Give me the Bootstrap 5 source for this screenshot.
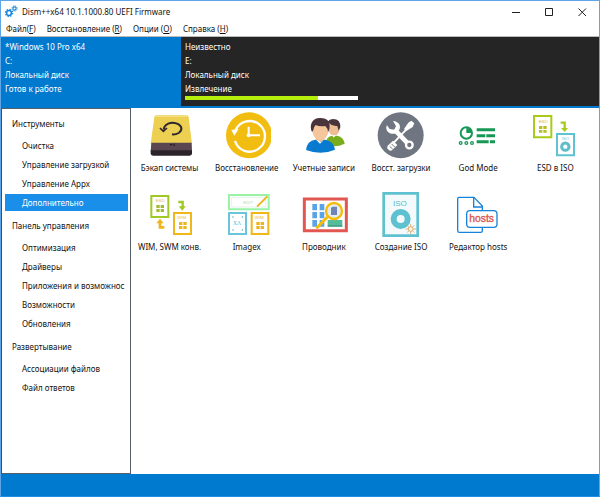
<!DOCTYPE html>
<html lang="ru">
<head>
<meta charset="utf-8">
<meta name="viewport" content="width=device-width, initial-scale=1">
<title>Dism++x64 10.1.1000.80 UEFI Firmware</title>
<link href="https://cdn.jsdelivr.net/npm/bootstrap@5.3.0/dist/css/bootstrap.min.css" rel="stylesheet">
<style>
body{font:8px/14px "Noto Sans","Open Sans",sans-serif;color:#111;background:#fff}
.win{border:1px solid #5fa6e8;border-bottom-color:#1c8fe9}
button{font:inherit;color:inherit;background:none;border:0;padding:0}
.title-bar{height:21px;padding-left:3px}
.title-text{margin-left:3px}
.win-btn{width:33px;height:21px}
.menu-line{height:15px;border-bottom:1px solid #bbb;padding-left:5px;gap:11px}
.menu-line a{color:inherit;text-decoration:none;line-height:14px}
.sys{background:#252525;color:#fff;height:71px;border-bottom:2px solid #007acf}
.sys-item{width:181px;padding:3px 4px 0;text-align:left;line-height:14px;display:flex;flex-direction:column}
.sys-item.current{background:#007acf;width:180px}
.disk-bar{height:4px;border-radius:0;background:#fff;width:100%}
.disk-bar .progress-bar{background:#b6ef0c}
.side{width:130px;border:1px solid #56616d;border-left-color:#0a5ba5;padding:2px 2px 0;overflow:hidden}
.side h2{font:inherit;line-height:26px;margin:0 0 0 8px}
.side a{display:block;height:17px;line-height:17px;margin:0 0 2px 1px;padding-left:17px;color:inherit;text-decoration:none;white-space:nowrap}
.side a.active{background:#1a8fea;color:#fff}
.tools{padding:3px 5px 0 0}
.tool{height:79px;white-space:nowrap;display:flex;flex-direction:column;align-items:center;justify-content:flex-start}
.tool svg{display:block;width:48px;height:49px;margin-bottom:1px}
.foot{height:22px;background:#007acf}
</style>
<script src="https://cdn.jsdelivr.net/npm/bootstrap@5.3.0/dist/js/bootstrap.bundle.min.js"></script>
</head>
<body>
<div class="win d-flex flex-column vh-100">
<header>
<div class="title-bar d-flex align-items-center">
<svg width="15" height="15" viewBox="0 0 15 15" fill="none" stroke="#1687dd"><circle cx="5" cy="9" r="2.4" stroke-width="1.5"/><circle cx="5" cy="9" r="3.6" stroke-width="1.3" stroke-dasharray="1.4 1.43"/><circle cx="10.5" cy="4.5" r="1.6" stroke-width="1.1"/><circle cx="10.5" cy="4.5" r="2.6" stroke-width="1" stroke-dasharray="1 1.04"/></svg>
<span class="title-text">Dism++x64 10.1.1000.80 UEFI Firmware</span>
<div class="ms-auto d-flex">
<button class="win-btn" aria-label="Свернуть"><svg width="9" height="9" stroke="#222"><path d="M0 4.5h8"/></svg></button>
<button class="win-btn" aria-label="Развернуть"><svg width="9" height="9" stroke="#222" fill="none"><path d="M.5.5h7v7h-7z"/></svg></button>
<button class="win-btn" aria-label="Закрыть"><svg width="9" height="9" stroke="#222"><path d="M.5.5l7.5 7.5M8 .5L.5 8"/></svg></button>
</div>
</div>
<nav class="menu-line d-flex">
<a href="#">Файл(<u>F</u>)</a><a href="#">Восстановление (<u>R</u>)</a><a href="#">Опции (<u>O</u>)</a><a href="#">Справка (<u>H</u>)</a>
</nav>
<div class="sys d-flex">
<button class="sys-item current"><span>*Windows 10 Pro x64</span><span>C:</span><span>Локальный диск</span><span>Готов к работе</span></button>
<button class="sys-item"><span>Неизвестно</span><span>E:</span><span>Локальный диск</span><span>Извлечение</span><span class="progress disk-bar"><span class="progress-bar" style="width:77%"></span></span></button>
</div>
</header>
<div class="d-flex flex-grow-1">
<nav class="side flex-shrink-0">
<h2>Инструменты</h2>
<a href="#">Очистка</a><a href="#">Управление загрузкой</a><a href="#">Управление Appx</a><a href="#" class="active">Дополнительно</a>
<h2>Панель управления</h2>
<a href="#">Оптимизация</a><a href="#">Драйверы</a><a href="#">Приложения и возможнос</a><a href="#">Возможности</a><a href="#">Обновления</a>
<h2>Развертывание</h2>
<a href="#">Ассоциации файлов</a><a href="#">Файл ответов</a>
</nav>
<main class="tools flex-grow-1">
<div class="row row-cols-6 g-0 align-items-start">
<button class="tool"><svg viewBox="39 18 144 147"><path d="M71 31H160Q166 31 167 37L177 116H53L64 37Q65 31 71 31Z" fill="#edcf52"/><path d="M68 34H162" stroke="#f4df85" stroke-width="4"/><path d="M55 113H176L177 139H53Z" fill="#594650"/><path d="M53 136H177V145Q177 152 170 152H60Q53 152 53 145Z" fill="#2c242b"/><path d="M111 119h6M123 116v7" stroke="#211b20" stroke-width="4"/><path d="M92 74C94 56 114 50 130 55S151 74 137 84Q128 89 117 88" fill="none" stroke="#30262d" stroke-width="6"/><path d="M81 69L91 79L102 69" fill="none" stroke="#30262d" stroke-width="5"/></svg>Бэкап системы</button>
<button class="tool"><svg viewBox="273 18 144 147"><circle cx="351" cy="91" r="69" fill="#f1bd10"/><path d="M311 75A46 46 0 1 1 309 108" fill="none" stroke="#fff" stroke-width="7"/><path d="M298 75L320 72L307 92Z" fill="#fff"/><path d="M350 65V91H384" fill="none" stroke="#fff" stroke-width="6"/><circle cx="350" cy="91" r="6" fill="#fff"/></svg>Восстановление</button>
<button class="tool"><svg viewBox="45 18 144 147"><path d="M121 118Q124 93 142 92H157Q176 96 179 116Q155 128 126 121Z" fill="#78ae1d"/><path d="M139 88L146 98L155 88" fill="#fff"/><ellipse cx="147" cy="71" rx="17" ry="20" fill="#eebd94"/><path d="M127 70Q122 43 144 42Q167 42 166 67L161 77L157 63Q143 65 132 55Z" fill="#49343c"/><path d="M63 135Q66 107 91 104H121Q146 108 150 134Q108 152 63 135Z" fill="#087bd1"/><path d="M91 103Q104 116 119 103L113 94H96Z" fill="#f2bf94"/><path d="M94 105L105 116L116 105L108 110Z" fill="#fff"/><ellipse cx="106" cy="78" rx="24" ry="27" fill="#f5c69c"/><path d="M81 80Q74 67 80 53Q87 38 107 39Q132 40 134 59Q135 72 129 82Q129 70 121 63Q104 66 92 60Q86 65 84 78Z" fill="#49343c"/></svg>Учетные записи</button>
<button class="tool"><svg viewBox="279 18 144 147"><circle cx="350" cy="91" r="69" fill="#707681"/><path d="M373 67L318 125" stroke="#fff" stroke-width="6"/><path d="M360 72L373 53L382 47L391 55L386 66L367 78Z" fill="#fff"/><path d="M327 107L340 120L324 136Q317 139 311 132Q308 127 311 122Z" fill="#fff"/><path d="M317 124l9 8M323 117l9 9" stroke="#707681" stroke-width="3"/><path d="M331 73L372 116" stroke="#fff" stroke-width="14"/><path d="M309 61Q303 70 312 81Q324 91 338 83Q351 75 347 60Q341 49 327 48L336 63L331 74L317 72Z" fill="#fff"/><circle cx="376" cy="120" r="10" fill="#707681" stroke="#fff" stroke-width="7"/></svg>Восст. загрузки</button>
<button class="tool"><svg viewBox="45 18 144 147" fill="none" stroke="#169956"><circle cx="82" cy="84" r="17" stroke-width="6"/><path d="M82 84V68A17 17 0 0 1 99 84Z" fill="#169956" stroke="none"/><circle cx="65" cy="114" r="4" stroke-width="4"/><circle cx="82" cy="114" r="4" stroke-width="4"/><circle cx="99" cy="114" r="4" stroke-width="4"/><path d="M113 74h55M113 92h26M142 92h26M113 110h36M153 110h15" stroke-width="9"/></svg>God Mode</button>
<button class="tool"><svg viewBox="279 18 144 147"><path d="M288 33H340V97H288Z" fill="#fff" stroke="#a7cb18" stroke-width="6"/><text x="302" y="53" font-family="Liberation Sans" font-size="13" fill="#d4b740">ESD</text><path d="M303 63h10v9h-10zm13 0h10v9h-10zM303 75h10v8h-10zm13 0h10v8h-10z" fill="#b6bf20"/><path d="M368 53H380V72" fill="none" stroke="#a7cb18" stroke-width="7"/><path d="M369 69H390L380 81Z" fill="#a7cb18"/><path d="M357 87H408V151H357Z" fill="#fff" stroke="#5fc3d2" stroke-width="6"/><text x="371" y="106" font-family="Liberation Sans" font-size="13" fill="#6fc7d4">ISO</text><circle cx="382" cy="125" r="11" fill="none" stroke="#5fbccb" stroke-width="9"/></svg>ESD в ISO</button>
<button class="tool"><svg viewBox="39 15 144 147"><path d="M55 33H106V96H55Z" fill="#fff" stroke="#a0c925" stroke-width="6"/><text x="68" y="51" font-family="Liberation Sans" font-size="13" fill="#e6b94a">ESD</text><path d="M70 60h10v9H70zm13 0h10v9H83zM70 72h10v9H70zm13 0h10v9H83z" fill="#a2ba31"/><path d="M136 51H149V67" fill="none" stroke="#a0c925" stroke-width="7"/><path d="M137 64H158L148 77Z" fill="#a0c925"/><path d="M94 127H81V112" fill="none" stroke="#f0b319" stroke-width="8"/><path d="M70 115H92L81 101Z" fill="#f0b319"/><path d="M123 84H174V147H123Z" fill="#fff" stroke="#f1b719" stroke-width="6"/><text x="133" y="103" font-family="Liberation Sans" font-size="13" fill="#e8b84c">WIM</text><path d="M138 111h10v9h-10zm13 0h10v9h-10zM138 123h10v9h-10zm13 0h10v9h-10z" fill="#edb31c"/></svg>WIM, SWM конв.</button>
<button class="tool"><svg viewBox="273 15 144 147"><path d="M291 30H410V73H291Z" fill="#fff" stroke="#98f3a7" stroke-width="6"/><path d="M299 37H401V66H299Z" fill="none" stroke="#d5efd8" stroke-width="2"/><text x="334" y="57" font-family="Liberation Sans" font-size="13" fill="#a9d7b0">EDIT</text><path d="M375 65L406 34" stroke="#eab521" stroke-width="6"/><path d="M291 84H342V147H291Z" fill="#fff" stroke="#69c4dc" stroke-width="6"/><path d="M301 96h4m24 0h4M301 135h4m24 0h4" stroke="#6fbacb" stroke-width="4"/><text x="303" y="121" font-family="Liberation Serif" font-size="17" fill="#63b7d5">XΛ</text><path d="M359 84H409V147H359Z" fill="#fff" stroke="#f1b719" stroke-width="6"/><text x="368" y="103" font-family="Liberation Sans" font-size="13" fill="#e8b84c">WIM</text><path d="M373 111h10v9h-10zm13 0h10v9h-10zM373 123h10v9h-10zm13 0h10v9h-10z" fill="#edb31c"/></svg>Imagex</button>
<button class="tool"><svg viewBox="45 15 144 147"><path d="M58 42H184V137H58Z" fill="#fff" stroke="#e25752" stroke-width="9"/><path d="M82 57h14v19H82zm22 0h14v19h-14zM82 81h14v19H82zm22 0h14v19h-14zM82 105h14v20H82zm22 0h14v20h-14z" fill="#5aa4e6"/><path d="M128 105h44v20h-44z" fill="#55bd9b"/><path d="M128 123h44" stroke="#378b74" stroke-width="3"/><path d="M127 96L94 130" stroke="#f5bd09" stroke-width="9"/><circle cx="147" cy="78" r="24" fill="#e4edf3" stroke="#f5bd09" stroke-width="7"/><path d="M138 68l5-3h13v25h-18z" fill="#7185b5"/></svg>Проводник</button>
<button class="tool"><svg viewBox="279 15 144 147"><path d="M299 25H401V152H299Z" fill="#f4fafb" stroke="#5dc1d0" stroke-width="8"/><text x="327" y="63" font-family="Liberation Sans" font-size="24" fill="#55bac9">ISO</text><circle cx="350" cy="102" r="21" fill="none" stroke="#5dc1d0" stroke-width="18"/><g stroke="#d9b27b" stroke-width="3"><path d="M380 117v31M365 132h31M369 121l22 22M391 121l-22 22"/><circle cx="380" cy="132" r="7" fill="#fff5df"/></g></svg>Создание ISO</button>
<button class="tool"><svg viewBox="45 15 144 147"><path d="M105 37H60Q56 37 56 42V137Q56 142 61 142H125Q130 142 130 137V63Z" fill="#fff" stroke="#1683dc" stroke-width="4"/><path d="M104 37V66H130" fill="none" stroke="#1683dc" stroke-width="4"/><rect x="83" y="77" width="91" height="50" rx="10" fill="#fff" stroke="#1683dc" stroke-width="4"/><text x="91" y="112" font-family="Liberation Sans" font-size="31" fill="#d95550" stroke="#d95550" stroke-width="1">hosts</text></svg>Редактор hosts</button>
</div>
</main>
</div>
<footer class="foot"></footer>
</div>
</body>
</html>
